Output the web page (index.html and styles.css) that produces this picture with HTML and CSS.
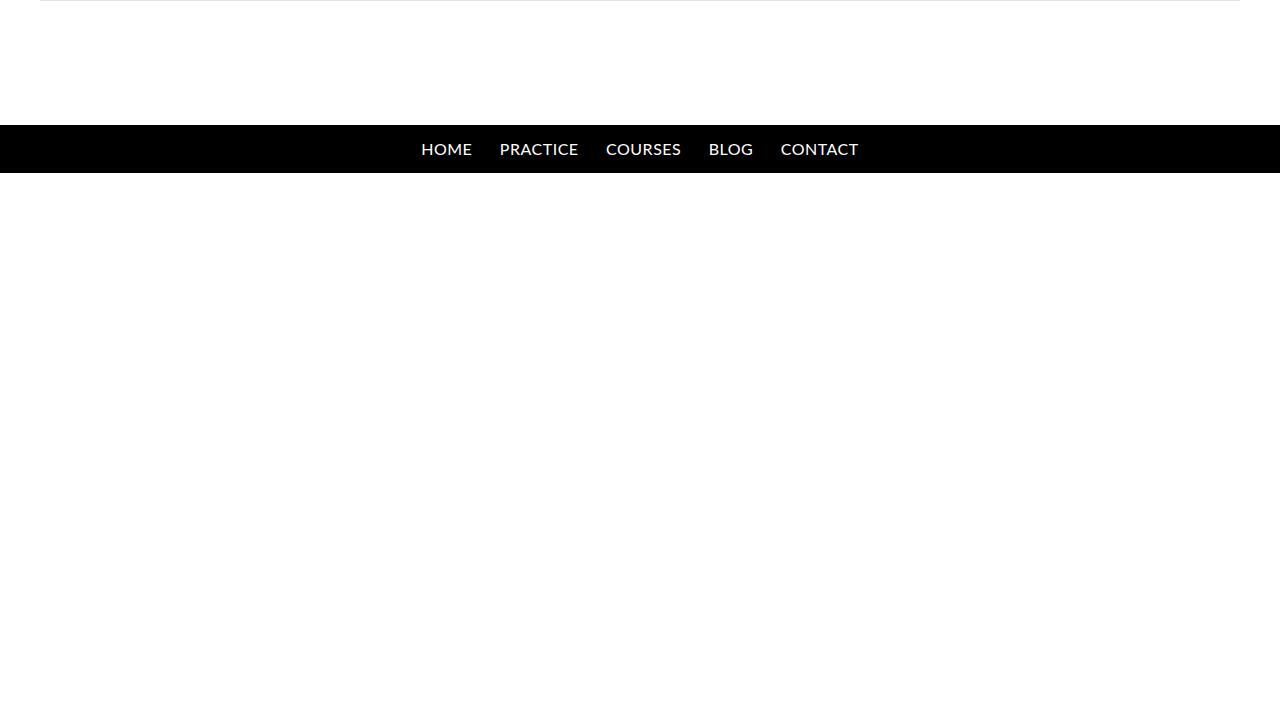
FILE: index.html
```html
<!DOCTYPE html>
<html lang="en">
<head>
<meta charset="utf-8">
<title>Menu</title>
<link rel="stylesheet" href="styles.css">
</head>
<body>
<div class="topline"></div>
<div class="spacer"></div>
<nav class="mainnav">
  <ul class="menu">
    <li><a href="#">HOME</a></li>
    <li><a href="#">PRACTICE</a></li>
    <li><a href="#">COURSES</a></li>
    <li><a href="#">BLOG</a></li>
    <li><a href="#">CONTACT</a></li>
  </ul>
</nav>
</body>
</html>
```
FILE: styles.css
```css
html, body {
  margin: 0;
  padding: 0;
  background: #ffffff;
  font-family: Lato, "Open Sans", sans-serif;
}
.topline {
  width: 1200px;
  margin: 0 auto;
  height: 1px;
  background: #e4e4e4;
}
.spacer {
  height: 124px;
}
.mainnav {
  background: #000000;
  height: 48px;
}
.menu {
  list-style: none;
  margin: 0;
  padding: 0;
  display: flex;
  justify-content: center;
  align-items: center;
  height: 48px;
}
.menu a {
  display: block;
  padding: 0 13.75px;
  color: #ffffff;
  text-decoration: none;
  font-size: 16px;
  letter-spacing: 0.5px;
  line-height: 48px;
}
```
